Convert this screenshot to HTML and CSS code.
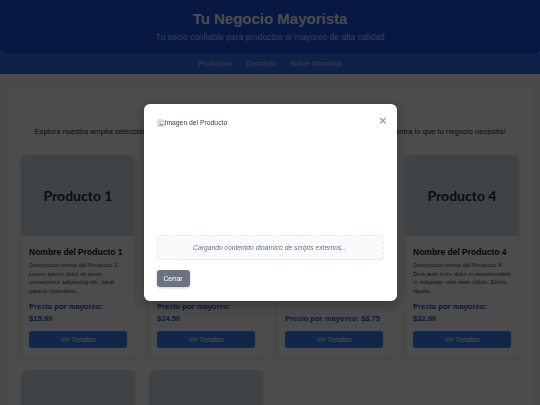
FILE: index.html
```html
<!DOCTYPE html>
<html>
<head>
    <title>Tu Negocio Mayorista</title>
    <link rel="stylesheet" href="styles.css">
</head>
<body>
    <header class="site-header">
        <h1>Tu Negocio Mayorista</h1>
        <p>Tu socio confiable para productos al mayoreo de alta calidad</p>
    </header>
    <nav class="site-nav">
        <a href="#">Productos</a>
        <a href="#">Contacto</a>
        <a href="#">Sobre Nosotros</a>
    </nav>
    <main class="container">
        <h2>Nuestros Productos al Mayoreo</h2>
        <p class="intro">Explora nuestra amplia selección de productos de alta calidad a precios competitivos para tu tienda. ¡Encuentra lo que tu negocio necesita!</p>
        <div class="grid">
            <div class="card">
                <div class="card-image">Producto 1</div>
                <div class="card-body">
                    <h3>Nombre del Producto 1</h3>
                    <p class="desc">Descripción breve del Producto 1. Lorem ipsum dolor sit amet, consectetur adipiscing elit. Ideal para tu inventario.</p>
                    <p class="price">Precio por mayoreo: $15.99</p>
                    <button class="details">Ver Detalles</button>
                </div>
            </div>
            <div class="card">
                <div class="card-image">Producto 2</div>
                <div class="card-body">
                    <h3>Nombre del Producto 2</h3>
                    <p class="desc">Descripción breve del Producto 2. Sed do eiusmod tempor incididunt ut labore et dolore magna aliqua.</p>
                    <p class="price">Precio por mayoreo: $24.50</p>
                    <button class="details">Ver Detalles</button>
                </div>
            </div>
            <div class="card">
                <div class="card-image">Producto 3</div>
                <div class="card-body">
                    <h3>Nombre del Producto 3</h3>
                    <p class="desc">Descripción breve del Producto 3. Ut enim ad minim veniam, quis nostrud exercitation.</p>
                    <p class="price">Precio por mayoreo: $8.75</p>
                    <button class="details">Ver Detalles</button>
                </div>
            </div>
            <div class="card">
                <div class="card-image">Producto 4</div>
                <div class="card-body">
                    <h3>Nombre del Producto 4</h3>
                    <p class="desc">Descripción breve del Producto 4. Duis aute irure dolor in reprehenderit in voluptate velit esse cillum. Envío rápido.</p>
                    <p class="price">Precio por mayoreo: $32.00</p>
                    <button class="details">Ver Detalles</button>
                </div>
            </div>
            <div class="card">
                <div class="card-image"></div>
            </div>
            <div class="card">
                <div class="card-image"></div>
            </div>
        </div>
    </main>

    <div class="overlay">
        <div class="modal">
            <button class="close">&times;</button>
            <div class="modal-image">
                <svg class="broken" viewBox="0 0 16 16">
                    <path d="M1.5 1.5h9l4 4v9h-13z" fill="#fff" stroke="#a8a8a8"/>
                    <path d="M10.5 1.5v4h4" fill="#e8e8e8" stroke="#a8a8a8"/>
                    <path d="M3 3h6v5H3z" fill="#bcd0f2"/>
                    <path d="M3 13l3.5-4.5L9 11l2-2 2 2.5V13z" fill="#5aa84a"/>
                </svg>
                <span>Imagen del Producto</span>
            </div>
            <div class="dynamic">Cargando contenido dinámico de scripts externos...</div>
            <button class="dismiss">Cerrar</button>
        </div>
    </div>
</body>
</html>
```

FILE: styles.css
```css
html, body {
    height: 100%;
    overflow: hidden;
}
body {
    margin: 0;
    background-color: #f3f4f6;
    font-family: "Liberation Sans", Arial, sans-serif;
    color: #1f2937;
}
.site-header {
    height: 53px;
    box-sizing: border-box;
    padding-top: 9px;
    background-color: #1a50e0;
    border-radius: 0 0 2px 2px;
    text-align: center;
    color: #fff;
}
.site-header h1 {
    margin: 0;
    font-size: 15px;
    line-height: 20px;
}
.site-header p {
    margin: 2px 0 0;
    font-size: 8.5px;
    line-height: 12px;
    color: #c7d2fe;
}
.site-nav {
    display: flex;
    justify-content: center;
    align-items: center;
    gap: 14px;
    height: 21px;
    background-color: #3070f0;
}
.site-nav a {
    font-size: 7.5px;
    color: #c7d2fe;
    text-decoration: none;
}
.container {
    margin: 15px 7px 0;
    padding: 12px 14px 14px;
    background-color: #fff;
    border-radius: 4px;
}
.container h2 {
    margin: 0;
    text-align: center;
    font-size: 14px;
    line-height: 18px;
}
.intro {
    margin: 7px 0 0;
    text-align: center;
    font-size: 7.65px;
    line-height: 12px;
}
.grid {
    display: grid;
    grid-template-columns: repeat(4, 1fr);
    gap: 13px 14px;
    margin-top: 17px;
}
.card {
    display: flex;
    flex-direction: column;
    background-color: #fff;
    border-radius: 6px;
    box-shadow: 0 2px 6px rgba(0, 0, 0, 0.1);
    overflow: hidden;
}
.card-image {
    display: flex;
    align-items: center;
    justify-content: center;
    height: 81px;
    flex-shrink: 0;
    background-color: #d3e2ea;
    font-family: Lato, sans-serif;
    font-size: 14px;
    font-weight: 700;
    color: #1f2937;
}
.card-body {
    display: flex;
    flex-direction: column;
    flex: 1;
    padding: 10px 8px 9px;
}
.card-body h3 {
    margin: 0;
    font-size: 8.5px;
    line-height: 12px;
    color: #111827;
}
.desc {
    flex: 1;
    margin: 3px 0 0;
    font-size: 6px;
    line-height: 8.6px;
    color: #374151;
}
.price {
    margin: 6px 0 0;
    font-size: 7.6px;
    font-weight: bold;
    line-height: 12px;
    color: #2b50d0;
}
.details {
    flex-shrink: 0;
    height: 17px;
    margin-top: 6px;
    padding: 0;
    border: 0;
    border-radius: 3px;
    background-color: #3b82f6;
    font-family: inherit;
    font-size: 6.6px;
    color: #fff;
}
.overlay {
    position: fixed;
    inset: 0;
    display: flex;
    align-items: center;
    justify-content: center;
    background-color: rgba(0, 0, 0, 0.7);
}
.modal {
    position: relative;
    width: 253px;
    height: 197px;
    box-sizing: border-box;
    padding: 13px;
    background-color: #fff;
    border-radius: 6px;
    box-shadow: 0 4px 14px rgba(0, 0, 0, 0.3);
}
.close {
    position: absolute;
    top: 10px;
    right: 10px;
    padding: 0;
    border: 0;
    background: none;
    font-family: inherit;
    font-size: 13px;
    font-weight: bold;
    line-height: 14px;
    color: #9ca3af;
}
.modal-image {
    display: flex;
    align-items: flex-start;
    height: 117px;
    padding-top: 1px;
    font-size: 6.8px;
    line-height: 10px;
    color: #374151;
}
.broken {
    width: 8px;
    height: 8px;
    margin-top: 1px;
}
.dynamic {
    height: 25px;
    box-sizing: border-box;
    border: 1px dashed #e5e7eb;
    border-radius: 3px;
    background-color: #f9fafb;
    text-align: center;
    font-size: 6.75px;
    font-style: italic;
    line-height: 23px;
    color: #6b7280;
}
.dismiss {
    display: block;
    width: 33px;
    height: 17px;
    margin-top: 10px;
    padding: 0;
    border: 0;
    border-radius: 3px;
    background-color: #6b7280;
    box-shadow: 0 1px 3px rgba(0, 0, 0, 0.2);
    font-family: inherit;
    font-size: 6.75px;
    color: #fff;
}
```
